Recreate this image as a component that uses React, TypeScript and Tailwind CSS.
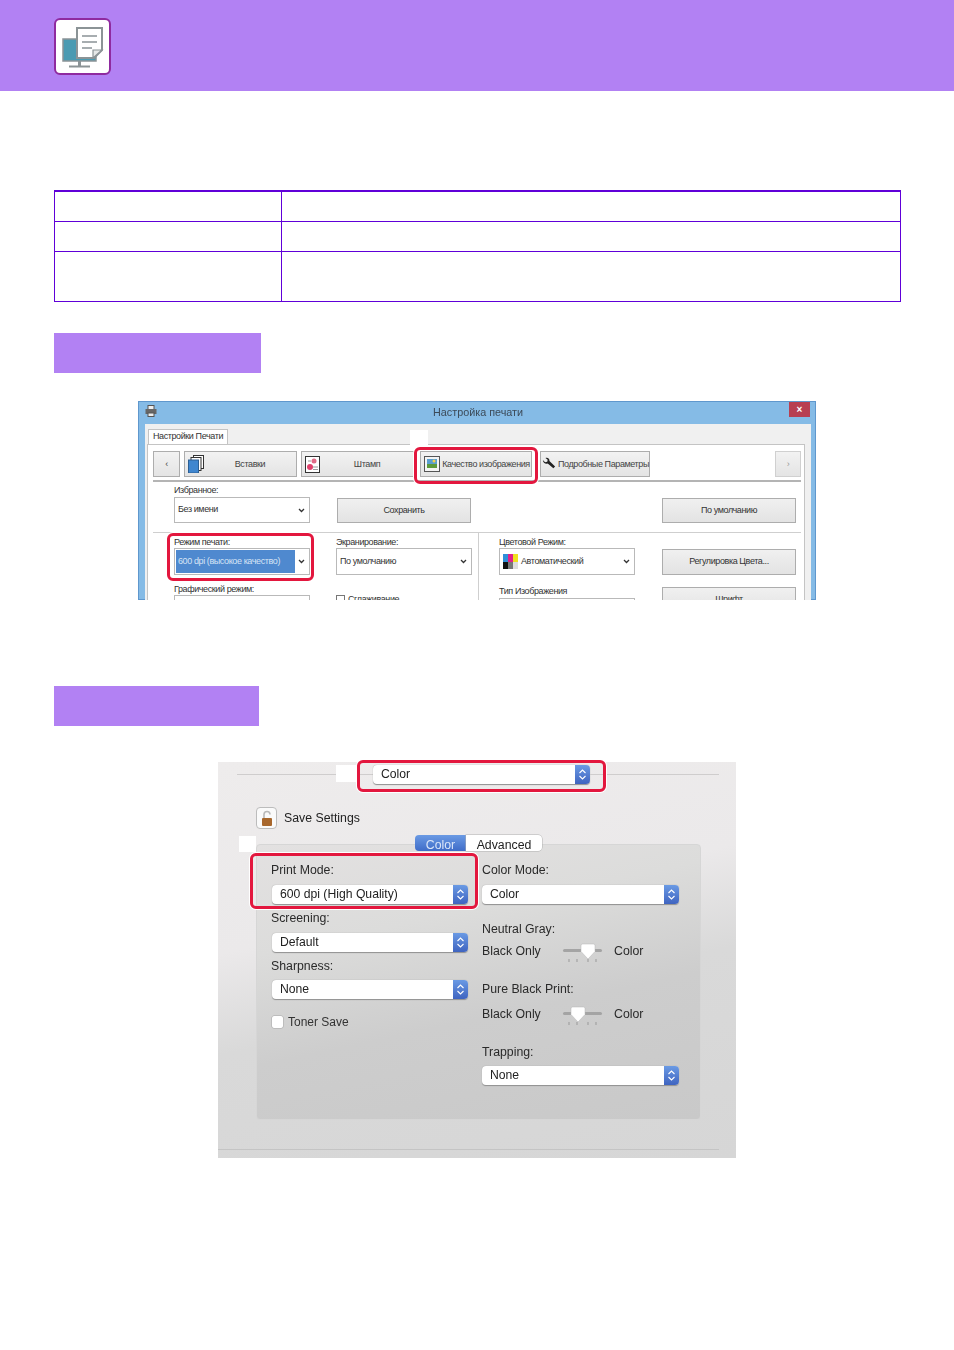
import type { ReactNode } from 'react';

const winFont = { fontFamily: '"Liberation Sans", sans-serif' };

function HeaderIcon() {
  return (
    <div className="ml-[54px] mt-[2px] flex h-[57px] w-[57px] items-center justify-center rounded-[6px] border-2 border-[#8f2a9f] bg-white">
      <svg width="53" height="53" viewBox="0 0 53 53">
        <rect x="7" y="19" width="33" height="22" fill="#4a9ab2" stroke="#8b9396" strokeWidth="1.5" />
        <rect x="22" y="41" width="3" height="5" fill="#8b9396" />
        <rect x="13" y="45.5" width="21" height="2" fill="#8b9396" />
        <path d="M21 8h25v22l-8 8H21z" fill="#fff" stroke="#8b9396" strokeWidth="2" />
        <path d="M26 16h15M26 22h15M26 28h10" stroke="#8b9396" strokeWidth="1.6" />
        <path d="M37 38v-8h9z" fill="#e6e8e8" stroke="#8b9396" strokeWidth="1.2" />
      </svg>
    </div>
  );
}

function InfoTable() {
  return (
    <div className="ml-[54px] mt-[99px] w-[847px] border-x border-t-2 border-[#6000d8]">
      <div className="grid h-[30px] grid-cols-[227px_1fr] border-b border-[#6000d8]">
        <div className="border-r border-[#6000d8]" />
        <div />
      </div>
      <div className="grid h-[30px] grid-cols-[227px_1fr] border-b border-[#6000d8]">
        <div className="border-r border-[#6000d8]" />
        <div />
      </div>
      <div className="grid h-[50px] grid-cols-[227px_1fr] border-b border-[#6000d8]">
        <div className="border-r border-[#6000d8]" />
        <div />
      </div>
    </div>
  );
}

function RedBox({ className }: { className: string }) {
  return (
    <div className={`absolute rounded-[6px] border-[3px] border-[#e3173e] shadow-[0_0_0_1px_#fff] ${className}`} />
  );
}

function NavButton({ label, icon, className }: { label?: string; icon?: ReactNode; className: string }) {
  return (
    <div className={`flex h-[26px] items-center whitespace-nowrap border border-[#adadad] bg-[linear-gradient(#f2f2f2,#e4e4e4)] text-[9px] tracking-[-0.4px] text-[#444] ${className}`}>
      {icon}
      {label && <span className="flex-1 pt-px text-center">{label}</span>}
    </div>
  );
}

function WinSelect({ children, width = 'w-[136px]', selected }: { children: ReactNode; width?: string; selected?: boolean }) {
  return (
    <div className={`flex h-[27px] items-center border border-[#b9b9b9] bg-white text-[9px] tracking-[-0.4px] text-[#333] ${width}`}>
      {selected ? (
        <div className="ml-[1px] flex h-[23px] w-[119px] items-center bg-[#4f89cf] pl-[2px] text-[#d6e4f5]">{children}</div>
      ) : (
        <div className="flex flex-1 items-center gap-[3px] pl-[3px]">{children}</div>
      )}
      <svg className="ml-auto mr-[4px]" width="7" height="5" viewBox="0 0 7 5">
        <path d="M1 1l2.5 2.5L6 1" fill="none" stroke="#333" strokeWidth="1.3" />
      </svg>
    </div>
  );
}

function WinButton({ label, className = '' }: { label: string; className?: string }) {
  return (
    <div className={`flex items-center justify-center border border-[#adadad] bg-[linear-gradient(#f0f0f0,#e3e3e3)] text-[9px] tracking-[-0.4px] text-[#333] ${className}`}>
      {label}
    </div>
  );
}

function WinLabel({ children, className = '' }: { children: ReactNode; className?: string }) {
  return <div className={`h-[11px] text-[9px] leading-[11px] tracking-[-0.4px] text-[#333] ${className}`}>{children}</div>;
}

function WindowsDialog() {
  return (
    <div className="relative ml-[138px] mt-[28px] h-[199px] w-[678px] overflow-hidden" style={winFont}>
      <div className="h-full bg-[#85bbe6] pl-[7px] pr-[5px] shadow-[inset_0_0_0_1px_#5f97cd] blur-[0.3px]">
        <div className="relative flex h-[23px] items-center justify-center text-[10.8px] text-[#3c4a58]">
          <svg className="absolute left-0 top-[4px]" width="12" height="12" viewBox="0 0 12 12">
            <rect x="3" y="0.5" width="6" height="4" fill="#eee" stroke="#555" />
            <rect x="0.5" y="4" width="11" height="5" fill="#666" />
            <rect x="3" y="8" width="6" height="3.5" fill="#eee" stroke="#555" />
          </svg>
          <span>Настройка печати</span>
          <div className="absolute right-[1px] top-[1px] flex h-[15px] w-[21px] items-center justify-center bg-[#b83f52] text-[10px] font-bold leading-none text-white">×</div>
        </div>
        <div className="h-full bg-[#f0f0f0] pl-[2px] pr-[6px] pt-[5px]">
          <div className="ml-[1px] flex h-[15px] w-[80px] items-center justify-center border border-b-0 border-[#c4c4c4] bg-white text-[9px] tracking-[-0.4px] text-[#333]">
            Настройки Печати
          </div>
          <div className="h-full border border-[#c4c4c4] bg-white pl-[5px] pr-[3px]">
            <div className="mt-[6px] flex">
              <NavButton label="‹" className="w-[27px]" />
              <NavButton
                label="Вставки"
                className="ml-[4px] w-[113px] pl-[3px]"
                icon={
                  <svg width="16" height="18" viewBox="0 0 16 18">
                    <rect x="5.5" y="0.5" width="10" height="13" fill="#fff" stroke="#333" />
                    <rect x="3" y="2.5" width="10" height="13" fill="#fff" stroke="#333" />
                    <rect x="0.5" y="5" width="10" height="13" fill="#3f86cf" stroke="#2c5f94" />
                  </svg>
                }
              />
              <NavButton
                label="Штамп"
                className="ml-[4px] w-[113px] pl-[3px] pr-[1px]"
                icon={
                  <svg className="mr-[2px]" width="15" height="17" viewBox="0 0 15 17">
                    <rect x="0.5" y="0.5" width="14" height="16" fill="#fff" stroke="#333" />
                    <circle cx="9" cy="5" r="2.5" fill="#e06a86" />
                    <circle cx="5" cy="11" r="3" fill="#e0416c" />
                    <path d="M3 5h3M8 11h5M8 13.5h5" stroke="#999" />
                  </svg>
                }
              />
              <NavButton
                label="Качество изображения"
                className="ml-[6px] w-[112px] border-[#5f9fd8] bg-[linear-gradient(#dcecfa,#bcdcf6)] pl-[3px] pr-[1px]"
                icon={
                  <svg className="mr-[2px]" width="16" height="16" viewBox="0 0 16 16">
                    <rect x="0.5" y="0.5" width="15" height="15" fill="#f4f4f4" stroke="#555" />
                    <rect x="3" y="3" width="10" height="5" fill="#5a9fd0" />
                    <rect x="3" y="8" width="10" height="4" fill="#5c9a3c" />
                    <circle cx="10" cy="5" r="1.5" fill="#f2d14c" />
                  </svg>
                }
              />
              <NavButton
                label="Подробные Параметры"
                className="ml-[8px] w-[110px] pl-[1px]"
                icon={
                  <svg className="mr-[2px]" width="16" height="16" viewBox="0 0 16 16">
                    <path d="M1 3.5L3.5 6 6 5.5 6.5 3 4 1c2.5-.8 5 .8 4.5 3.5L15 11l-2 2-6.5-5.5C4 8.5 1 6.500 1 3.500z" fill="#222" />
                  </svg>
                }
              />
              <NavButton label="›" className="ml-auto w-[26px] border-[#d0d0d0] text-[#999]" />
            </div>
            <div className="mt-[3px] h-[2px] bg-[#b4b4b4]" />

            <div className="mt-[3px] flex items-end pl-[21px] pr-[5px]">
              <div className="w-[163px]">
                <WinLabel className="mb-[1px]">Избранное:</WinLabel>
                <WinSelect width="w-[136px] !h-[26px]">Без имени</WinSelect>
              </div>
              <WinButton label="Сохранить" className="h-[25px] w-[134px]" />
              <WinButton label="По умолчанию" className="ml-auto h-[25px] w-[134px]" />
            </div>
            <div className="mt-[9px] h-px bg-[#cfcfcf]" />

            <div className="flex pl-[21px]">
              <div className="w-[162px] pt-[4px]">
                <WinLabel>Режим печати:</WinLabel>
                <WinSelect selected>600 dpi (высокое качество)</WinSelect>
                <WinLabel className="mt-[9px]">Графический режим:</WinLabel>
                <WinSelect>{''}</WinSelect>
              </div>
              <div className="w-[142px] pt-[4px]">
                <WinLabel>Экранирование:</WinLabel>
                <WinSelect>По умолчанию</WinSelect>
                <div className="mt-[18px] flex items-center gap-[3px] text-[9px] tracking-[-0.4px] text-[#333]">
                  <div className="h-[9px] w-[9px] border border-[#777] bg-white" />
                  Сглаживание
                </div>
              </div>
              <div className="w-[184px] border-l border-[#cfcfcf] pl-[20px] pt-[4px]">
                <WinLabel>Цветовой Режим:</WinLabel>
                <WinSelect>
                  <svg width="15" height="15" viewBox="0 0 15 15">
                    <rect width="5" height="8" fill="#2f8fd8" />
                    <rect x="5" width="5" height="8" fill="#e0218a" />
                    <rect x="10" width="5" height="8" fill="#f0e020" />
                    <rect y="8" width="5" height="7" fill="#111" />
                    <rect x="5" y="8" width="5" height="7" fill="#777" />
                    <rect x="10" y="8" width="5" height="7" fill="#ddd" />
                  </svg>
                  Автоматический
                </WinSelect>
                <WinLabel className="mt-[11px]">Тип Изображения</WinLabel>
                <div className="mt-[1px]">
                  <WinSelect>{''}</WinSelect>
                </div>
              </div>
              <div className="w-[134px] pt-[16px]">
                <WinButton label="Регулировка Цвета..." className="h-[26px]" />
                <WinButton label="Шрифт" className="mt-[12px] h-[26px]" />
              </div>
            </div>
          </div>
        </div>
      </div>
      <div className="absolute left-[272px] top-[29px] h-[17px] w-[18px] bg-white" />
      <RedBox className="left-[276px] top-[46px] h-[37px] w-[124px]" />
      <RedBox className="left-[29px] top-[132px] h-[48px] w-[147px]" />
    </div>
  );
}

function MacPopup({ label, className = '' }: { label: string; className?: string }) {
  return (
    <div className={`flex h-[19px] overflow-hidden rounded-[4px] bg-white text-[12.2px] leading-none text-[#222] shadow-[0_0.5px_1px_#8f8f8f] ${className}`}>
      <div className="flex flex-1 items-center pl-[8px]">{label}</div>
      <div className="flex w-[15px] items-center justify-center bg-[linear-gradient(#6a9ae4,#3f64c0)]">
        <svg width="9" height="13" viewBox="0 0 9 13">
          <path d="M1.5 5L4.500 2l3 3M1.500 8l3 3 3-3" fill="none" stroke="#fff" strokeWidth="1.100" />
        </svg>
      </div>
    </div>
  );
}

function MacLabel({ children, className = '' }: { children: ReactNode; className?: string }) {
  return <div className={`h-[16px] text-[12.3px] leading-[15px] text-[#2a2a2a] ${className}`}>{children}</div>;
}

function SliderRow({ thumb }: { thumb: number }) {
  return (
    <div className="flex h-[16px] items-center text-[12.3px] leading-[15px] text-[#2a2a2a]">
      <span className="w-[81px]">Black Only</span>
      <svg className="overflow-visible" width="39" height="16" viewBox="0 0 39 16">
        <rect x="0" y="6" width="39" height="3" rx="1.500" fill="#a4a4a4" />
        <path d="M6 16v3M14 16v3M25 16v3M33 16v3" stroke="#999" />
        <path d={`M${thumb - 7} 2.500a1.500 1.500 0 0 1 1.500-1.500h11a1.500 1.500 0 0 1 1.500 1.500v6L${thumb} 16l-7-7.500z`} fill="#fff" stroke="#b5b5b5" strokeWidth="0.500" />
      </svg>
      <span className="ml-[12px]">Color</span>
    </div>
  );
}

function MacDialog() {
  return (
    <div
      className="relative ml-[218px] mt-[36px] h-[396px] w-[518px] bg-[linear-gradient(168deg,#eeecec_0%,#ebe9ea_38%,#d9d9d9_58%,#d6d6d6_100%)] blur-[0.25px]"
      style={winFont}
    >
      <div className="pt-[3px]">
        <div className="flex items-center pl-[19px] pr-[17px]">
          <div className="h-px w-[136px] bg-[#cfcdcd]" />
          <MacPopup label="Color" className="w-[217px]" />
          <div className="h-px flex-1 bg-[#cfcdcd]" />
        </div>
      </div>

      <div className="ml-[38px] mt-[23px] flex items-center">
        <div className="flex h-[22px] w-[21px] items-center justify-center rounded-[4px] border border-[#bcbcbc] bg-[#fafafa]">
          <svg width="12" height="17" viewBox="0 0 12 17">
            <path d="M3 8V4.500a3 3 0 0 1 6 0" fill="none" stroke="#b9b9b9" strokeWidth="1.600" />
            <rect x="1" y="8" width="10" height="8" rx="1" fill="#a8672c" />
          </svg>
        </div>
        <span className="ml-[7px] text-[12.3px] text-[#222]">Save Settings</span>
      </div>

      <div className="relative z-10 ml-[197px] mt-[6px] flex h-[16px] w-[127px] text-[12.3px] leading-[16px]">
        <div className="w-[51px] rounded-l-[4px] bg-[linear-gradient(#6a9ae4,#3f6cc8)] pt-[2px] text-center text-[#dbe6f8]">Color</div>
        <div className="flex-1 rounded-r-[4px] bg-white pt-[2px] text-center text-[#222] shadow-[0_0_0_0.5px_#b0b0b0]">Advanced</div>
      </div>

      <div className="ml-[38px] -mt-[7px] flex h-[276px] w-[445px] gap-[14px] rounded-[4px] border border-[#d6d6d6] bg-[linear-gradient(168deg,#e3e1e1_0%,#dcdcdb_30%,#cdcdcd_60%,#c9c9c9_100%)] pl-[15px] pt-[18px]">
        <div className="w-[196px]">
          <MacLabel className="-ml-px">Print Mode:</MacLabel>
          <MacPopup label="600 dpi (High Quality)" className="mt-[6px]" />
          <MacLabel className="-ml-px mt-[7px]">Screening:</MacLabel>
          <MacPopup label="Default" className="mt-[6px]" />
          <MacLabel className="-ml-px mt-[7px]">Sharpness:</MacLabel>
          <MacPopup label="None" className="mt-[5px]" />
          <div className="mt-[14px] flex items-center text-[12px] text-[#333]">
            <div className="h-[12px] w-[11px] rounded-[2px] bg-white shadow-[0_0_0_0.5px_#a8a8a8]" />
            <span className="ml-[5px]">Toner Save</span>
          </div>
        </div>
        <div className="w-[197px]">
          <MacLabel>Color Mode:</MacLabel>
          <MacPopup label="Color" className="mt-[6px]" />
          <MacLabel className="mt-[18px]">Neutral Gray:</MacLabel>
          <div className="mt-[5px]">
            <SliderRow thumb={25} />
          </div>
          <MacLabel className="mt-[23px]">Pure Black Print:</MacLabel>
          <div className="mt-[8px]">
            <SliderRow thumb={15} />
          </div>
          <MacLabel className="mt-[23px]">Trapping:</MacLabel>
          <MacPopup label="None" className="mt-[5px]" />
        </div>
      </div>

      <div className="mr-[17px] mt-[29px] h-px bg-[#c4c4c4]" />

      <div className="absolute left-[118px] top-[3px] h-[17px] w-[20px] bg-white" />
      <div className="absolute left-[21px] top-[74px] h-[16px] w-[17px] bg-white" />
      <RedBox className="left-[139px] top-[-2px] h-[32px] w-[249px]" />
      <RedBox className="left-[32px] top-[91px] h-[56px] w-[228px]" />
    </div>
  );
}

export default function App() {
  return (
    <div className="min-h-[1350px] w-[954px] bg-white">
      <div className="flex h-[91px] items-center bg-[#b281f3]">
        <HeaderIcon />
      </div>
      <InfoTable />
      <div className="ml-[54px] mt-[31px] h-[40px] w-[207px] bg-[#b281f3]" />
      <WindowsDialog />
      <div className="ml-[54px] mt-[86px] h-[40px] w-[205px] bg-[#b281f3]" />
      <MacDialog />
    </div>
  );
}
